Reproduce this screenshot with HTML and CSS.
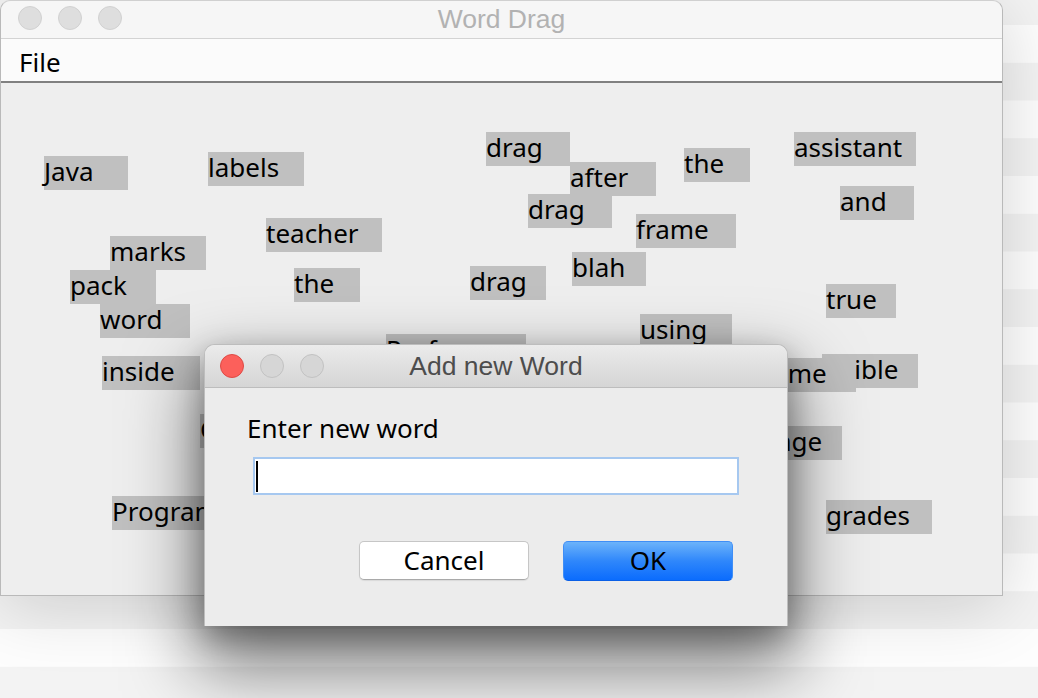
FILE: index.html
```html
<!DOCTYPE html>
<html>
<head>
<meta charset="utf-8">
<title>Word Drag</title>
<link rel="stylesheet" href="styles.css">
</head>
<body class="desktop">
  <div class="window main-window">
    <div class="titlebar">
      <div class="lights">
        <span class="light"></span>
        <span class="light"></span>
        <span class="light"></span>
      </div>
      <div class="title">Word Drag</div>
    </div>
    <div class="menubar"><span class="menu">File</span></div>
    <div class="canvas">
      <div class="word" style="left:43px;top:73px;width:84px">Java</div>
      <div class="word" style="left:207px;top:69px;width:96px">labels</div>
      <div class="word" style="left:265px;top:135px;width:116px">teacher</div>
      <div class="word" style="left:109px;top:153px;width:96px">marks</div>
      <div class="word" style="left:69px;top:187px;width:86px">pack</div>
      <div class="word" style="left:293px;top:185px;width:66px">the</div>
      <div class="word" style="left:99px;top:221px;width:90px">word</div>
      <div class="word" style="left:485px;top:49px;width:84px">drag</div>
      <div class="word" style="left:569px;top:79px;width:86px">after</div>
      <div class="word" style="left:683px;top:65px;width:66px">the</div>
      <div class="word" style="left:793px;top:49px;width:122px">assistant</div>
      <div class="word" style="left:527px;top:111px;width:84px">drag</div>
      <div class="word" style="left:839px;top:103px;width:74px">and</div>
      <div class="word" style="left:635px;top:131px;width:100px">frame</div>
      <div class="word" style="left:571px;top:169px;width:74px">blah</div>
      <div class="word" style="left:469px;top:183px;width:76px">drag</div>
      <div class="word" style="left:825px;top:201px;width:70px">true</div>
      <div class="word" style="left:639px;top:231px;width:92px">using</div>
      <div class="word" style="left:385px;top:251px;width:140px">Professor</div>
      <div class="word" style="left:101px;top:273px;width:98px">inside</div>
      <div class="word" style="left:821px;top:271px;width:96px">visible</div>
      <div class="word" style="left:756px;top:275px;width:99px">name</div>
      <div class="word" style="left:712px;top:343px;width:129px">message</div>
      <div class="word" style="left:199px;top:331px;width:120px">Computer</div>
      <div class="word" style="left:111px;top:413px;width:170px">Programming</div>
      <div class="word" style="left:825px;top:417px;width:106px">grades</div>
    </div>
  </div>

  <div class="window dialog">
    <div class="dialog-titlebar">
      <div class="lights small-gap">
        <span class="light close"></span>
        <span class="light dim"></span>
        <span class="light dim"></span>
      </div>
      <div class="dialog-title">Add new Word</div>
    </div>
    <div class="dialog-body">
      <div class="prompt">Enter new word</div>
      <div class="field"><span class="caret"></span></div>
      <div class="buttons">
        <div class="btn cancel">Cancel</div>
        <div class="btn ok">OK</div>
      </div>
    </div>
  </div>
</body>
</html>
```

FILE: styles.css
```css
* { box-sizing: border-box; }

html, body { margin: 0; padding: 0; }

.desktop {
  width: 1038px;
  height: 698px;
  overflow: hidden;
  position: relative;
  background-color: #f3f3f3;
  background-image: linear-gradient(to bottom, #fdfdfd 0, #fdfdfd 37.75px, #f3f3f3 37.75px, #f3f3f3 75.5px);
  background-size: 100% 75.5px;
  background-position: 0 25px;
  font-family: "Noto Sans", "DejaVu Sans", sans-serif;
}

.window {
  position: absolute;
  display: flex;
  flex-direction: column;
}

.main-window {
  left: 0;
  top: 0;
  width: 1003px;
  height: 596px;
  border: 1px solid #b9b9b9;
  border-top-color: #d0d0d0;
  border-radius: 10px 10px 0 0;
  background: #eeeeee;
  box-shadow: 0 10px 70px rgba(0, 0, 0, 0.16);
}

.titlebar {
  height: 38px;
  flex: none;
  display: grid;
  grid-template-columns: 1fr auto 1fr;
  background: #f6f6f6;
  border-bottom: 1px solid #d3d3d3;
  border-radius: 10px 10px 0 0;
}

.lights {
  display: flex;
  gap: 16px;
  padding: 5px 0 0 17px;
}

.light {
  width: 24px;
  height: 24px;
  border-radius: 50%;
  background: #dedede;
  border: 1px solid #d1d1d1;
  flex: none;
}

.title {
  font-family: "Liberation Sans", Arial, sans-serif;
  font-size: 26.5px;
  line-height: 36px;
  color: #b2b2b2;
  white-space: nowrap;
}

.menubar {
  height: 44px;
  flex: none;
  background: #fbfbfb;
  border-bottom: 2px solid #808080;
  padding: 4px 0 0 18px;
  font-size: 26px;
  line-height: 38px;
  color: #000;
}

.canvas {
  flex: 1;
  position: relative;
  background: #eeeeee;
  overflow: hidden;
}

.word {
  position: absolute;
  height: 34px;
  background: #c0c0c0;
  font-size: 26px;
  line-height: 31px;
  color: #000;
  white-space: nowrap;
}

/* dialog */
.dialog {
  left: 204px;
  top: 344px;
  width: 584px;
  height: 282px;
  border: 1px solid #bdbdbd;
  border-bottom: none;
  border-radius: 10px 10px 0 0;
  background: #ececec;
  box-shadow: 0 34px 70px 8px rgba(0, 0, 0, 0.5), 0 10px 30px rgba(0, 0, 0, 0.28);
}

.dialog-titlebar {
  height: 43px;
  flex: none;
  display: grid;
  grid-template-columns: 1fr auto 1fr;
  background: linear-gradient(to bottom, #ebebeb, #d5d5d5);
  border-bottom: 1px solid #bdbdbd;
  border-radius: 10px 10px 0 0;
}

.small-gap {
  padding: 9px 0 0 15px;
}

.light.close {
  background: #fc605b;
  border-color: #de4a45;
}

.light.dim {
  background: #d6d6d6;
  border-color: #c2c2c2;
}

.dialog-title {
  font-family: "Liberation Sans", Arial, sans-serif;
  font-size: 26.5px;
  line-height: 43px;
  color: #4d4d4d;
  white-space: nowrap;
}

.dialog-body {
  flex: 1;
  display: flex;
  flex-direction: column;
  align-items: flex-start;
  padding: 23px 0 0 42px;
}

.prompt {
  font-size: 26px;
  line-height: 34px;
  color: #000;
}

.field {
  margin: 12px 0 0 6px;
  width: 486px;
  height: 38px;
  background: #fff;
  border: 2px solid #a6c8f0;
  display: flex;
  align-items: center;
  padding-left: 1px;
}

.caret {
  width: 2px;
  height: 31px;
  background: #000;
}

.buttons {
  display: flex;
  gap: 34px;
  margin: 46px 0 0 112px;
  align-items: flex-start;
}

.btn {
  width: 170px;
  height: 40px;
  border-radius: 5px;
  font-size: 26px;
  line-height: 36px;
  text-align: center;
  color: #000;
}

.cancel {
  height: 39px;
  background: #ffffff;
  border: 1px solid #c6c6c6;
  border-bottom-color: #a9a9a9;
  box-shadow: 0 1px 1px rgba(0, 0, 0, 0.08);
}

.ok {
  background: linear-gradient(to bottom, #6cb3fa, #2f87fb 50%, #0b6cfd);
  border: 1px solid #3f8ef6;
  border-bottom-color: #0a5fe6;
}
```
